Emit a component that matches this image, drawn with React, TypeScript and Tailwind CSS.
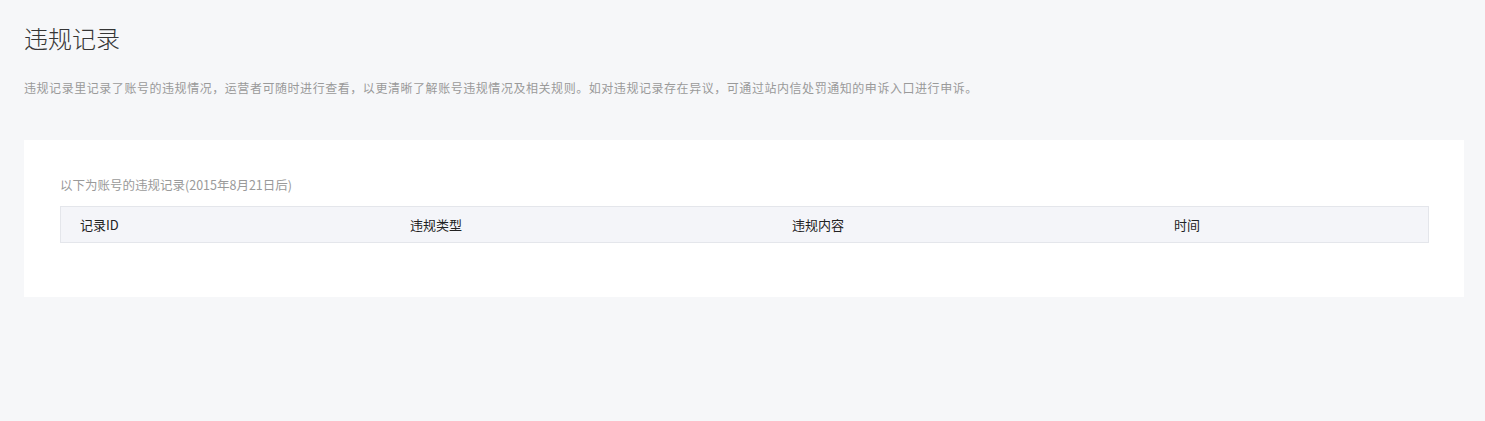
import React from "react";

export default function App() {
  const font = { fontFamily: '"Microsoft YaHei", "Noto Sans CJK SC", "Noto Sans", sans-serif' };
  return (
    <div className="min-h-[421px] w-full bg-[#f6f7f9] pl-6 pr-[21px] pt-[22px]" style={font}>
      <h1 className="text-[24px] leading-[32px] text-[#353535] font-light">违规记录</h1>
      <p className="mt-[24px] text-[12px] leading-[20px] tracking-[0.55px] text-[#9a9a9a]">
        违规记录里记录了账号的违规情况，运营者可随时进行查看，以更清晰了解账号违规情况及相关规则。如对违规记录存在异议，可通过站内信处罚通知的申诉入口进行申诉。
      </p>
      <div className="mt-[42px] bg-white pl-9 pr-[35px] pt-[35px] pb-[54px]">
        <div className="text-[12.5px] leading-[20px] text-[#9a9a9a]">以下为账号的违规记录(2015年8月21日后)</div>
        <div className="mt-[11px] flex h-[37px] items-center border border-[#e4e6eb] bg-[#f4f5f9] text-[13px] text-[#222]">
          <div className="w-[330px] pl-[19px]">记录ID</div>
          <div className="w-[382px] pl-[19px]">违规类型</div>
          <div className="w-[382px] pl-[19px]">违规内容</div>
          <div className="flex-1 pl-[19px]">时间</div>
        </div>
      </div>
    </div>
  );
}
